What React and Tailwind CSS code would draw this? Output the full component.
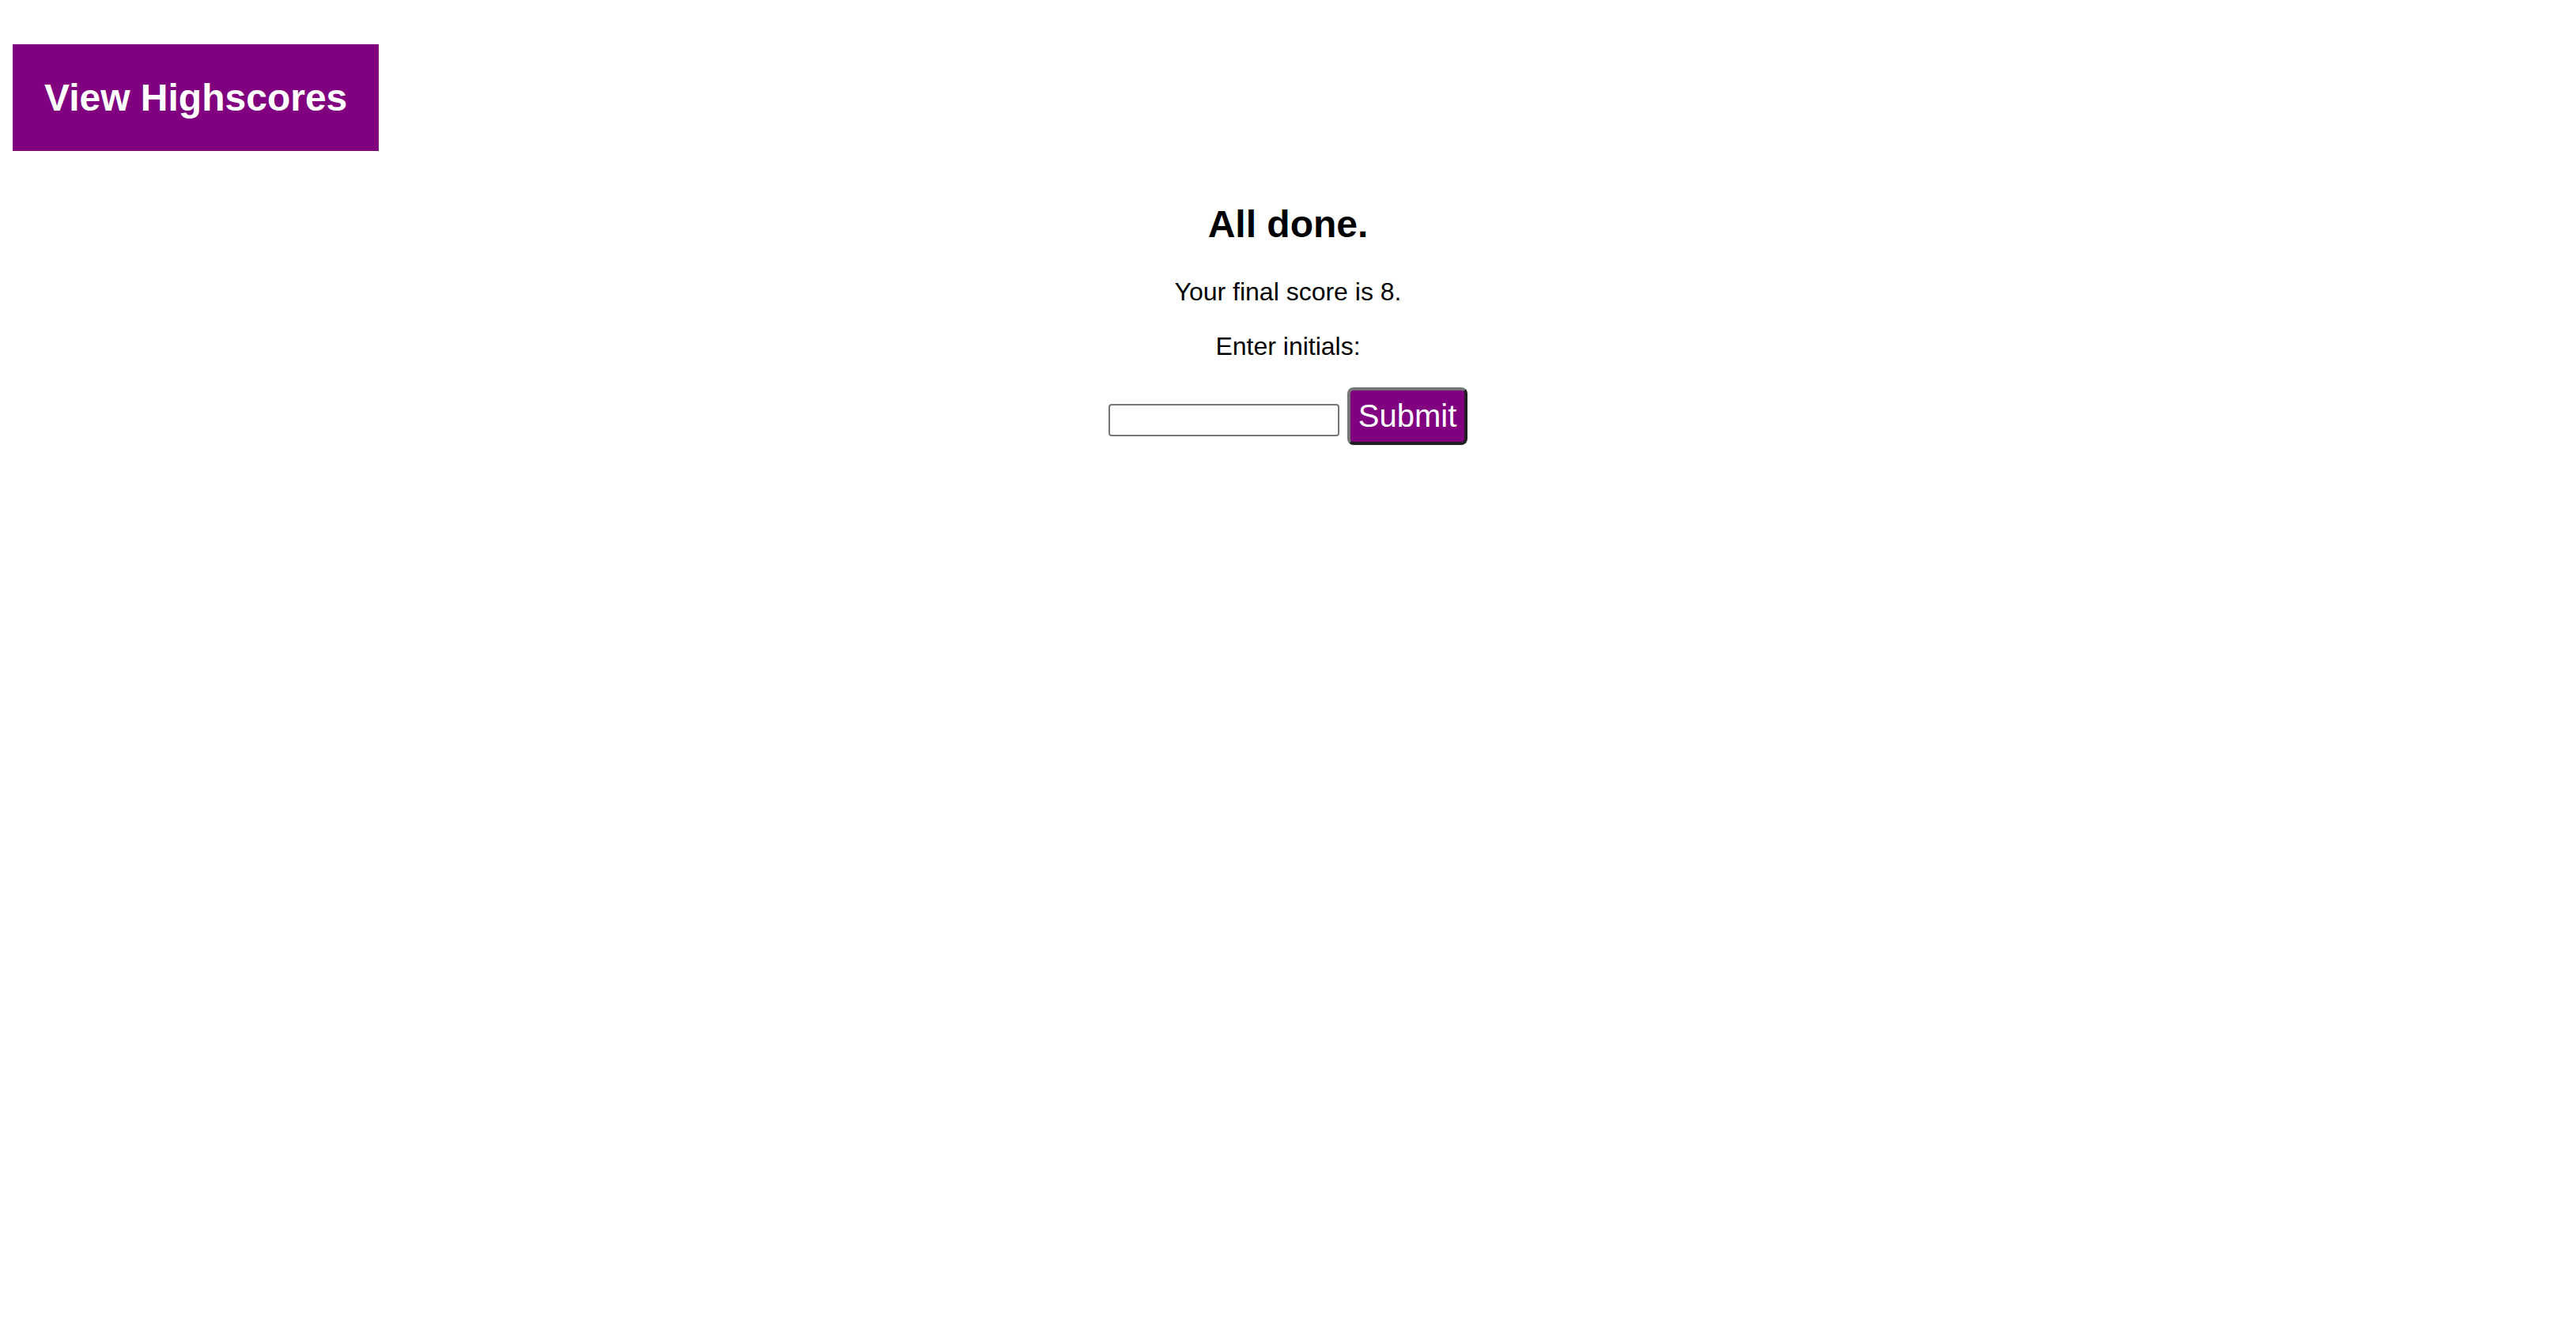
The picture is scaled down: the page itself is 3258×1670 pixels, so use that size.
import React from "react";

const FONT = { fontFamily: '"Liberation Sans", Arial, Helvetica, sans-serif' };

export default function App() {
  return (
    <div className="min-h-[1670px] w-full bg-white text-black px-4" style={FONT}>
      <div className="pt-[56px]">
        <button
          type="button"
          className="bg-[#800080] text-white font-bold text-[48px] leading-[1.15] p-[40px]"
        >
          View Highscores
        </button>
      </div>

      <div className="flex flex-col items-center text-center">
        <h1 className="mt-[65px] text-[48px] font-bold leading-[1.15]">All done.</h1>
        <p className="mt-[40px] text-[32px] leading-[1.15]">Your final score is 8.</p>
        <p className="mt-[32px] text-[32px] leading-[1.15]">Enter initials:</p>
        <div className="mt-[33px] flex items-start gap-[10px]">
          <input
            type="text"
            className="mt-[21px] w-[292px] h-[41px] border-2 border-[#767676] rounded-[4px] bg-white px-2 text-[26px] outline-none"
          />
          <button
            type="button"
            className="w-[152px] h-[73px] bg-[#800080] text-white text-[40px] leading-[1.15] rounded-[8px] border-[4px] border-t-[#767676] border-l-[#767676] border-b-[#1f1f1f] border-r-[#1f1f1f] flex items-center justify-center"
          >
            Submit
          </button>
        </div>
      </div>
    </div>
  );
}
